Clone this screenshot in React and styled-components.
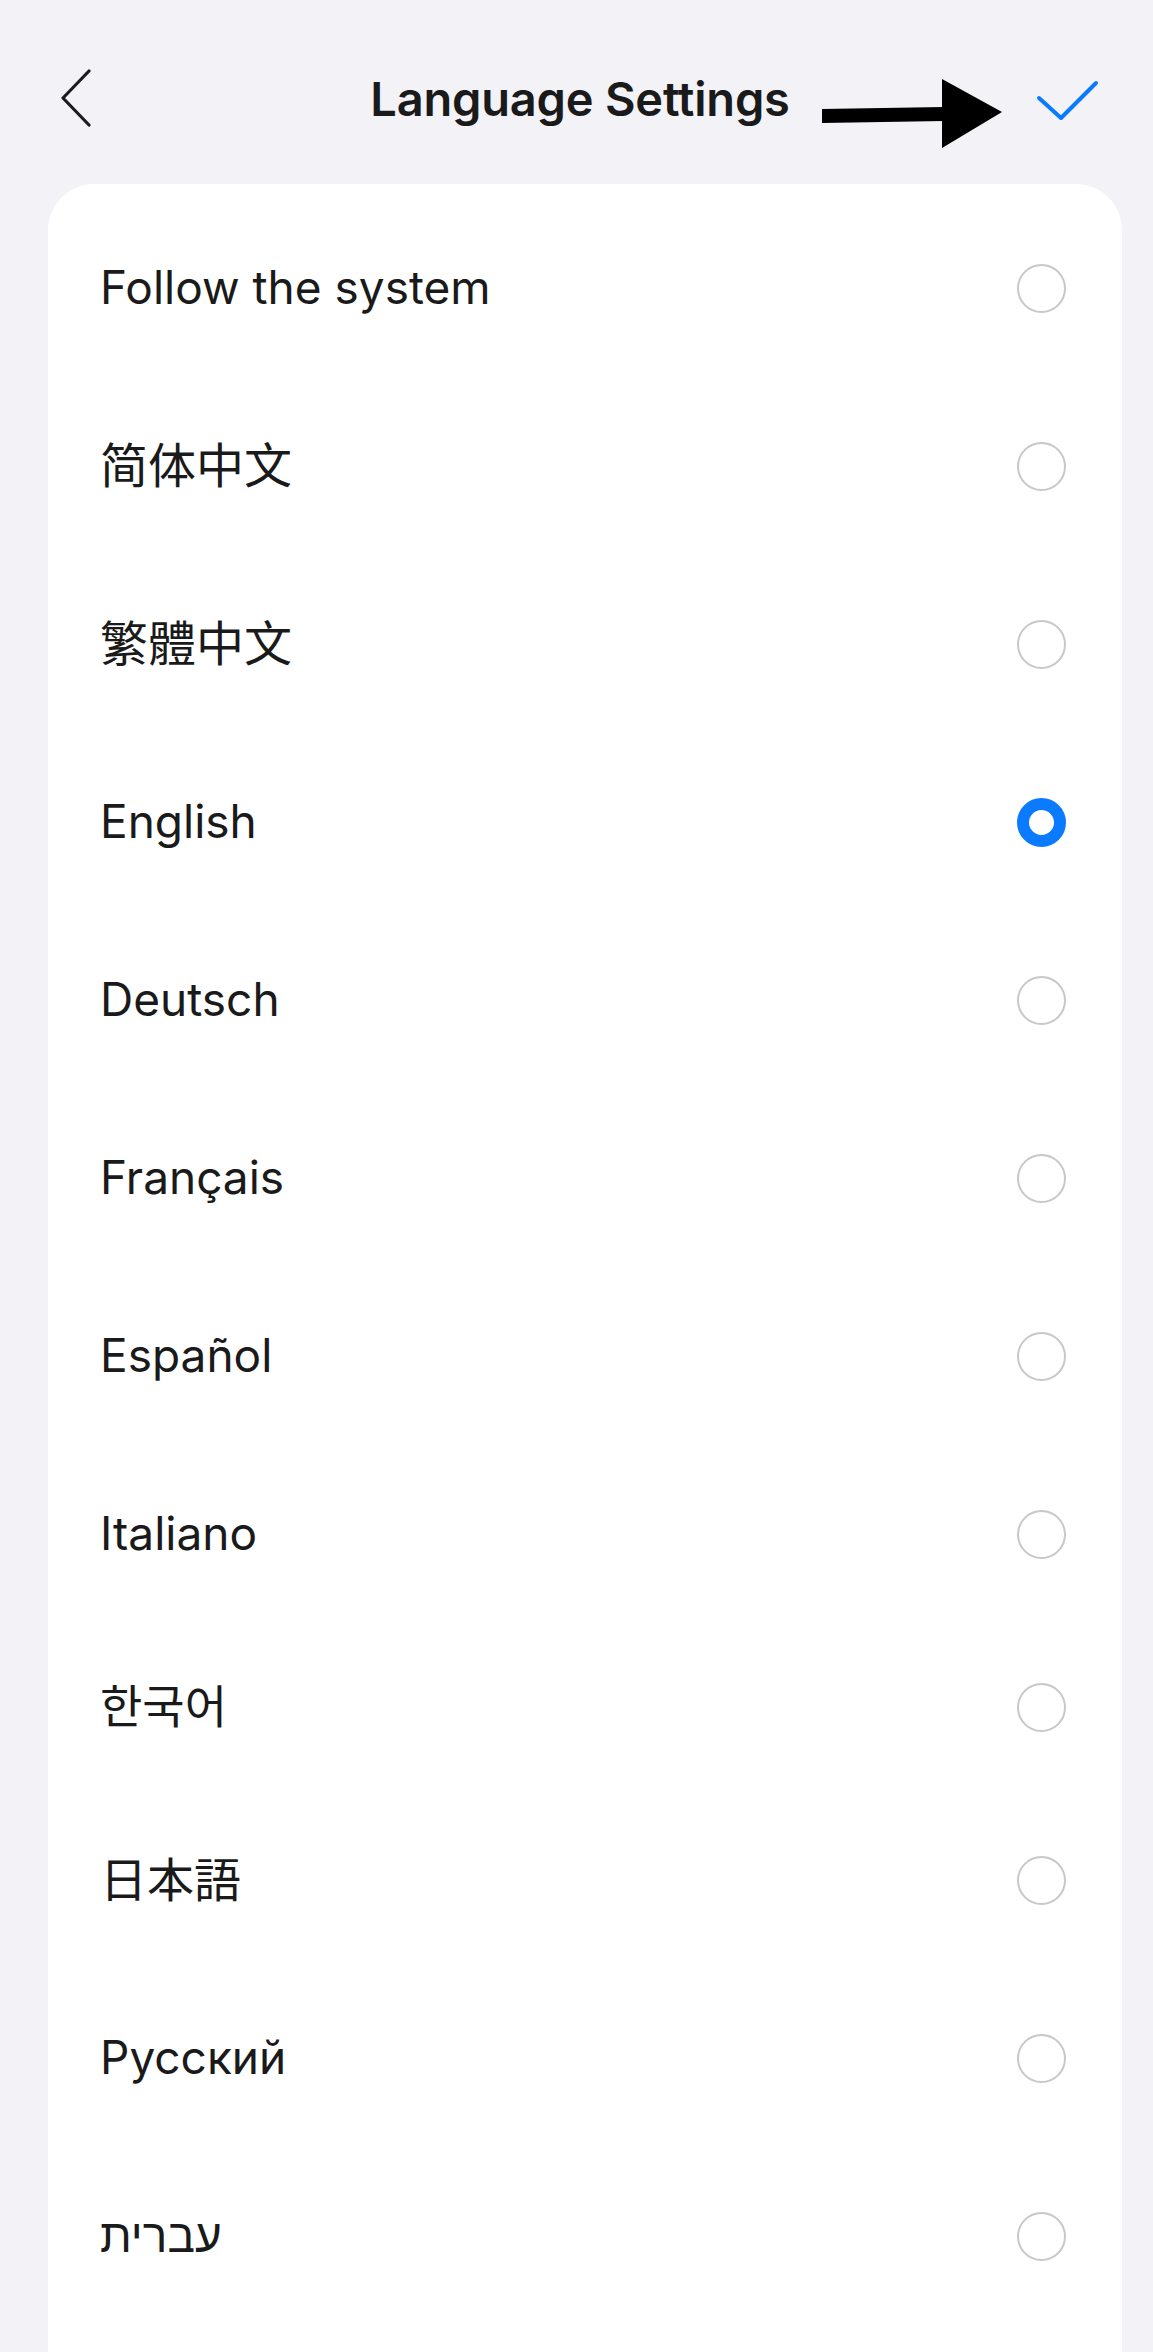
import styled, { createGlobalStyle } from 'styled-components';

const GlobalStyle = createGlobalStyle`
  html, body {
    margin: 0;
    padding: 0;
    background: #f2f2f7;
  }
  body {
    font-family: "Inter", "Liberation Sans", "Noto Sans CJK SC", sans-serif;
    -webkit-font-smoothing: antialiased;
  }
`;

const languages = [
  { label: 'Follow the system' },
  { label: '简体中文', lang: 'zh-Hans', size: 48 },
  { label: '繁體中文', lang: 'zh-Hant', size: 48 },
  { label: 'English', checked: true },
  { label: 'Deutsch' },
  { label: 'Français' },
  { label: 'Español' },
  { label: 'Italiano' },
  { label: '한국어', lang: 'ko', height: 168 },
  { label: '日本語', lang: 'ja', size: 47 },
  { label: 'Русский' },
  { label: 'עברית', lang: 'he' },
];

const cjkFonts = {
  'zh-Hans': '"Noto Sans CJK SC"',
  'zh-Hant': '"Noto Sans CJK TC"',
  ko: '"Noto Sans CJK KR"',
  ja: '"Noto Sans CJK JP"',
};

export default function App() {
  return (
    <Page>
      <GlobalStyle />
      <Header>
        <IconButton aria-label="Back">
          <svg width="32" height="58" viewBox="0 0 32 58" fill="none">
            <path
              d="M29 2 L3 29 L29 56"
              stroke="#1c1c1e"
              strokeWidth="3.2"
              strokeLinecap="round"
              strokeLinejoin="round"
            />
          </svg>
        </IconButton>
        <Title>Language Settings</Title>
        <IconButton aria-label="Done" $right>
          <svg width="64" height="42" viewBox="0 0 64 42" fill="none">
            <path
              d="M3 19 L25 39 L60 4"
              stroke="#0a7aff"
              strokeWidth="4"
              strokeLinecap="round"
              strokeLinejoin="round"
            />
          </svg>
        </IconButton>
        <Pointer width="186" height="74" viewBox="0 0 186 74">
          <polygon points="2,32 124,30 124,44 2,46" fill="#000" />
          <polygon points="122,2 122,71 182,35" fill="#000" />
        </Pointer>
      </Header>

      <Card>
        {languages.map((item) => (
          <Row key={item.label} $height={item.height}>
            <Label lang={item.lang} $font={cjkFonts[item.lang]} $size={item.size}>
              {item.label}
            </Label>
            <Radio $checked={item.checked} />
          </Row>
        ))}
      </Card>
    </Page>
  );
}

const Page = styled.div`
  width: 1153px;
  height: 2352px;
  overflow: hidden;
  background: #f2f2f7;
`;

const Header = styled.header`
  position: relative;
  display: grid;
  grid-template-columns: 1fr auto 1fr;
  align-items: center;
  height: 108px;
  padding: 44px 53px 32px 60px;
`;

const IconButton = styled.div`
  display: flex;
  align-items: center;
  justify-content: ${(p) => (p.$right ? 'flex-end' : 'flex-start')};
  height: 100%;
  margin-top: ${(p) => (p.$right ? '4px' : '0')};
`;

const Title = styled.h1`
  margin: 0;
  font-size: 47px;
  font-weight: 600;
  color: #1a1a1a;
  letter-spacing: -0.2px;
`;

const Pointer = styled.svg`
  position: absolute;
  left: 820px;
  top: 77px;
`;

const Card = styled.section`
  margin: 0 31px 0 48px;
  padding-top: 15px;
  min-height: 2300px;
  background: #ffffff;
  border-radius: 46px 46px 0 0;
`;

const Row = styled.div`
  display: flex;
  align-items: center;
  justify-content: space-between;
  height: ${(p) => p.$height || 178}px;
  padding: 0 56px 0 52px;
`;

const Label = styled.span`
  font-family: "Inter", ${(p) => p.$font || '"Liberation Sans"'}, "Noto Sans CJK SC", sans-serif;
  font-size: ${(p) => p.$size || 46}px;
  line-height: 1.2;
  color: #1a1a1a;
`;

const Radio = styled.span`
  box-sizing: border-box;
  width: 49px;
  height: 49px;
  border-radius: 50%;
  background: #ffffff;
  border: ${(p) => (p.$checked ? '12px solid #0a7aff' : '2.5px solid #c7c7cc')};
`;
